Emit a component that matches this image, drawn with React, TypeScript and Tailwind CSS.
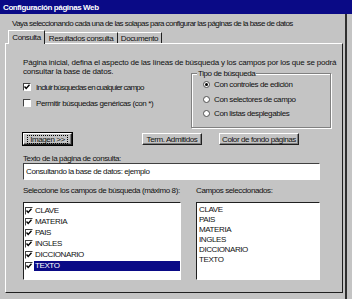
import React from "react";

const FONT = { fontFamily: '"Liberation Sans", Arial, sans-serif' };

function Check({ checked }: { checked: boolean }) {
  return (
    <span className="flex h-[8px] w-[8px] shrink-0 items-center justify-center border border-t-[#404040] border-l-[#404040] border-r-white border-b-white bg-white">
      {checked && (
        <svg width="6" height="6" viewBox="0 0 6 6">
          <path d="M0.5 2.5 L2.2 4.5 L5.5 0.8" stroke="#000" strokeWidth="1.4" fill="none" />
        </svg>
      )}
    </span>
  );
}

function Radio({ checked }: { checked: boolean }) {
  return (
    <span className="flex h-[7px] w-[7px] shrink-0 items-center justify-center rounded-full border border-[#505050] bg-white">
      {checked && <span className="h-[3px] w-[3px] rounded-full bg-black" />}
    </span>
  );
}

function Btn({ children, className = "" }: { children: React.ReactNode; className?: string }) {
  return (
    <div
      className={`flex h-[12px] items-center justify-center border border-t-white border-l-white border-r-[#202020] border-b-[#202020] bg-[#c4c4c4] shadow-[inset_-1px_-1px_0_#808080] ${className}`}
    >
      {children}
    </div>
  );
}

export default function App() {
  const left = ["CLAVE", "MATERIA", "PAIS", "INGLES", "DICCIONARIO", "TEXTO"];
  const right = ["CLAVE", "PAIS", "MATERIA", "INGLES", "DICCIONARIO", "TEXTO"];

  return (
    <div
      className="h-[299px] w-[352px] overflow-hidden whitespace-nowrap bg-[#c4c4c4] text-[8px] leading-[9px] tracking-[-0.4px] text-[#101010]"
      style={FONT}
    >
      {/* Title bar */}
      <div className="flex h-[14px] items-center bg-[#0a0a86] pl-[3px] text-[8px] font-bold tracking-[-0.4px] text-white">
        Configuración páginas Web
      </div>

      <div className="mr-[5px] h-[285px] border-r-2 border-[#303030]">
        <div className="pl-[12px] pt-[5px] tracking-[-0.55px]">
          Vaya seleccionando cada una de las solapas para configurar las páginas de la base de datos
        </div>

        {/* Tabs */}
        <div className="ml-[8px] mt-[2px] flex h-[13px] items-end">
          <div className="relative z-10 -mb-px flex h-[14px] w-[37px] items-center justify-center border-l border-t border-r border-l-white border-t-white border-r-[#202020] bg-[#c4c4c4]">
            Consulta
          </div>
          <div className="flex h-[11px] w-[73px] items-center justify-center border-t border-r border-t-white border-r-[#202020]">
            Resultados consulta
          </div>
          <div className="flex h-[11px] w-[44px] items-center justify-center border-t border-r border-t-white border-r-[#202020]">
            Documento
          </div>
        </div>

        {/* Panel */}
        <div className="ml-[5px] flex h-[250px] w-[338px] flex-col border border-t-white border-l-white border-r-[#202020] border-b-[#202020] pl-[17px] pt-[14px]">
          <div className="tracking-[-0.2px]">
            Página inicial, defina el aspecto de las líneas de búsqueda y los campos por los que se podrá
            <br />
            consultar la base de datos.
          </div>

          <div className="-mt-[3px] flex">
            <div className="flex w-[168px] flex-col gap-[6px] pt-[9px]">
              <div className="flex h-[10px] items-center gap-[5px]">
                <Check checked />
                <span className="tracking-[-0.75px]">Incluir búsquedas en cualquier campo</span>
              </div>
              <div className="flex h-[10px] items-center gap-[5px]">
                <Check checked={false} />
                <span>Permitir búsquedas genéricas (con *)</span>
              </div>
            </div>

            <div className="relative h-[55px] w-[140px] border border-[#808080] shadow-[1px_1px_0_white,inset_1px_1px_0_white]">
              <span className="absolute -top-[5px] left-[5px] bg-[#c4c4c4] px-[1px]">Tipo de búsqueda</span>
              <div className="flex flex-col gap-[6px] pl-[11px] pt-[6px]">
                <div className="flex h-[9px] items-center gap-[4px]">
                  <Radio checked />
                  <span>Con controles de edición</span>
                </div>
                <div className="flex h-[9px] items-center gap-[4px]">
                  <Radio checked={false} />
                  <span>Con selectores de campo</span>
                </div>
                <div className="-mt-[1px] flex h-[9px] items-center gap-[4px]">
                  <Radio checked={false} />
                  <span>Con listas desplegables</span>
                </div>
              </div>
            </div>
          </div>

          {/* Buttons */}
          <div className="mt-[5px] flex">
            <Btn className="w-[49px] outline outline-1 outline-black">
              <span className="border border-dotted border-black px-[2px] leading-[7px]">Imagen &gt;&gt;</span>
            </Btn>
            <Btn className="ml-[70px] w-[60px]">Term. Admitidos</Btn>
            <Btn className="ml-[17px] w-[80px]">Color de fondo páginas</Btn>
          </div>

          <div className="mt-[9px]">Texto de la página de consulta:</div>
          <div className="flex h-[17px] w-[297px] items-center border border-t-[#404040] border-l-[#404040] border-r-white border-b-white bg-white pl-[2px]">
            Consultando la base de datos: ejemplo
          </div>

          <div className="mt-[6px] flex">
            <div className="w-[173px]">Seleccione los campos de búsqueda (máximo 8):</div>
            <div>Campos seleccionados:</div>
          </div>

          <div className="mt-[7px] flex">
            <div className="h-[78px] w-[158px] border border-t-[#202020] border-l-[#202020] border-r-white border-b-white bg-white pt-[2px]">
              {left.map((f, i) => (
                <div key={f} className="flex h-[11px] items-center gap-[1px] pl-[1px]">
                  <Check checked />
                  <span
                    className={`flex h-[10px] flex-1 items-center pl-[1px] ${i === left.length - 1 ? "bg-[#0a0a86] text-white" : ""}`}
                  >
                    {f}
                  </span>
                </div>
              ))}
            </div>
            <div className="ml-[15px] h-[78px] w-[124px] border border-t-[#202020] border-l-[#202020] border-r-white border-b-white bg-white pl-[2px] pt-[2px]">
              {right.map((f) => (
                <div key={f} className="h-[10px] leading-[10px]">
                  {f}
                </div>
              ))}
            </div>
          </div>
        </div>
      </div>
    </div>
  );
}
